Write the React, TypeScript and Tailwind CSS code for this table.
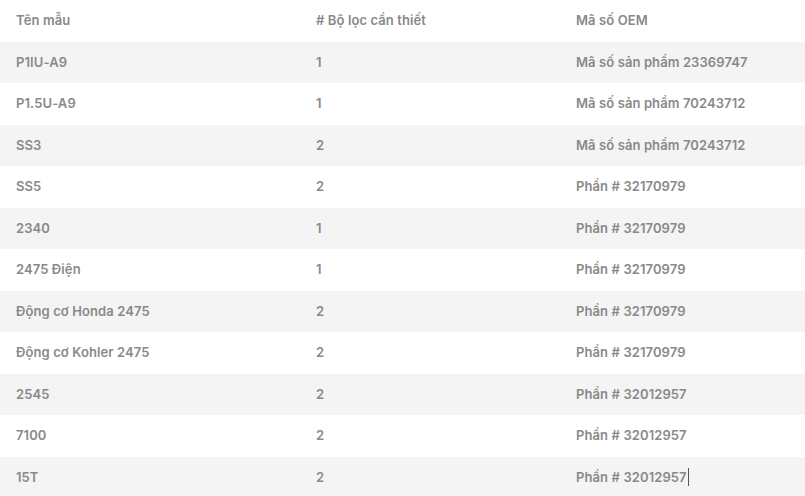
const rows: [string, string, string][] = [
  ["P1IU-A9", "1", "Mã số sản phẩm 23369747"],
  ["P1.5U-A9", "1", "Mã số sản phẩm 70243712"],
  ["SS3", "2", "Mã số sản phẩm 70243712"],
  ["SS5", "2", "Phần # 32170979"],
  ["2340", "1", "Phần # 32170979"],
  ["2475 Điện", "1", "Phần # 32170979"],
  ["Động cơ Honda 2475", "2", "Phần # 32170979"],
  ["Động cơ Kohler 2475", "2", "Phần # 32170979"],
  ["2545", "2", "Phần # 32012957"],
  ["7100", "2", "Phần # 32012957"],
  ["15T", "2", "Phần # 32012957"],
];

export default function App() {
  return (
    <div
      className="w-[805px] h-[496px] overflow-hidden bg-white text-[13px] font-semibold tracking-[0.1px] text-[#898989]"
      style={{ fontFamily: "Inter, 'Liberation Sans', sans-serif" }}
    >
      <div className="grid h-[41.5px] grid-cols-[300px_260px_1fr] items-center">
        <div className="pl-4">Tên mẫu</div>
        <div className="pl-4"># Bộ lọc cần thiết</div>
        <div className="pl-4">Mã số OEM</div>
      </div>
      {rows.map((r, i) => (
        <div
          key={i}
          className={
            "grid h-[41.5px] grid-cols-[300px_260px_1fr] items-center " +
            (i % 2 === 0 ? "bg-[#f4f4f4]" : "bg-white")
          }
        >
          <div className="pl-4">{r[0]}</div>
          <div className="pl-4">{r[1]}</div>
          <div className="flex items-center pl-4">
            {r[2]}
            {i === rows.length - 1 && (
              <span className="ml-px inline-block h-[18px] w-px bg-[#555]" />
            )}
          </div>
        </div>
      ))}
    </div>
  );
}
